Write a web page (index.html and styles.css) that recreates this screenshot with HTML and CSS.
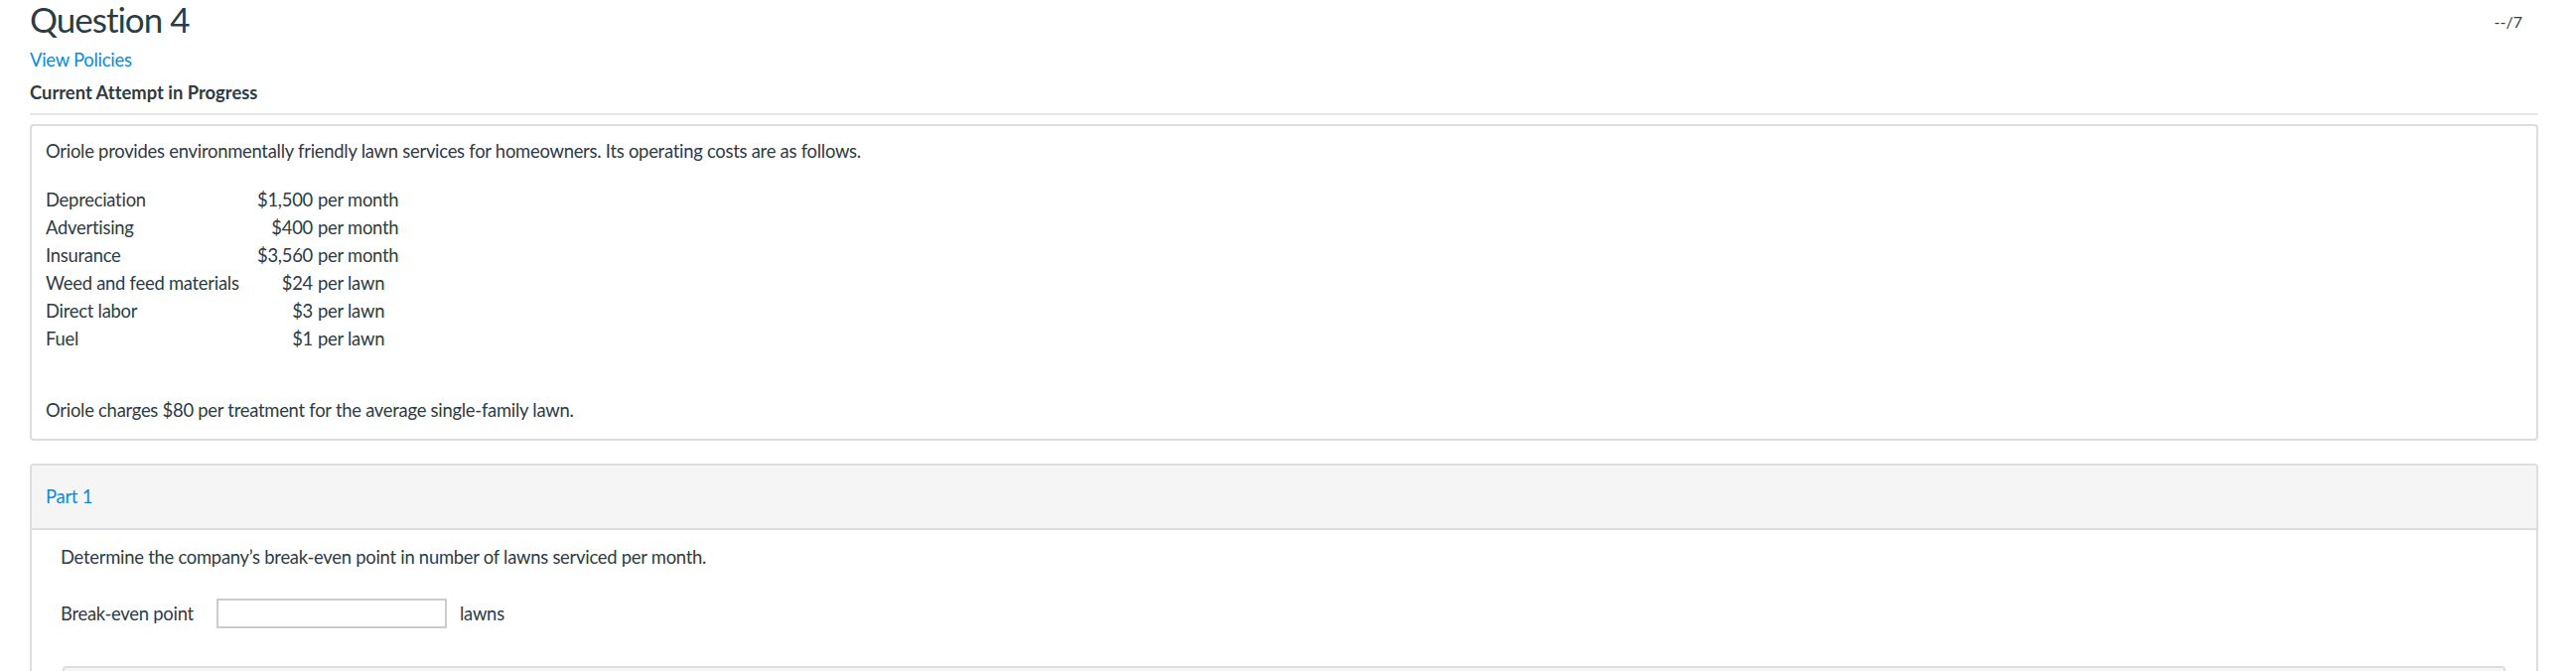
FILE: index.html
```html
<!DOCTYPE html>
<html lang="en">
<head>
<meta charset="utf-8">
<title>Question 4</title>
<link rel="stylesheet" href="styles.css">
</head>
<body>
<div class="page">
  <div class="q-header">
    <h1 class="q-title">Question 4</h1>
    <div class="q-points">--/7</div>
  </div>
  <a class="policies" href="#">View Policies</a>
  <div class="attempt">Current Attempt in Progress</div>
  <hr class="divider">

  <div class="card stem">
    <p class="stem-intro">Oriole provides environmentally friendly lawn services for homeowners. Its operating costs are as follows.</p>
    <div class="cost-table">
      <span class="cost-label">Depreciation</span><span class="cost-amt">$1,500</span><span class="cost-unit">per month</span>
      <span class="cost-label">Advertising</span><span class="cost-amt">$400</span><span class="cost-unit">per month</span>
      <span class="cost-label">Insurance</span><span class="cost-amt">$3,560</span><span class="cost-unit">per month</span>
      <span class="cost-label">Weed and feed materials</span><span class="cost-amt">$24</span><span class="cost-unit">per lawn</span>
      <span class="cost-label">Direct labor</span><span class="cost-amt">$3</span><span class="cost-unit">per lawn</span>
      <span class="cost-label">Fuel</span><span class="cost-amt">$1</span><span class="cost-unit">per lawn</span>
    </div>
    <p class="stem-outro">Oriole charges $80 per treatment for the average single-family lawn.</p>
  </div>

  <div class="card part">
    <div class="part-head">Part 1</div>
    <div class="part-body">
      <p class="part-q">Determine the company’s break-even point in number of lawns serviced per month.</p>
      <div class="answer-row">
        <label class="answer-label" for="bep">Break-even point</label>
        <input class="answer-input" id="bep" type="text">
        <span class="answer-unit">lawns</span>
      </div>
      <div class="sub-box"></div>
    </div>
  </div>
</div>
</body>
</html>
```

FILE: styles.css
```css
html, body {
  margin: 0;
  padding: 0;
  overflow: hidden;
  background: #fff;
}

body {
  font-family: Lato, "Open Sans", "Liberation Sans", sans-serif;
  color: #2d3b45;
  font-size: 18.4px;
  line-height: 28px;
  letter-spacing: -0.25px;
  font-variant-ligatures: none;
}

.page {
  padding: 0 38px 0 30px;
}

.q-header {
  display: flex;
  justify-content: space-between;
  align-items: flex-start;
}

.q-title {
  margin: 0;
  font-size: 35px;
  line-height: 39px;
  font-weight: 400;
  letter-spacing: -1px;
}

.q-points {
  font-size: 16px;
  line-height: 19px;
  margin-top: 12px;
  margin-right: 16px;
  letter-spacing: 0;
}

.policies {
  display: block;
  margin-top: 7px;
  color: #008ee2;
  text-decoration: none;
}

.attempt {
  font-weight: 700;
  margin-top: 5px;
  letter-spacing: 0;
}

.divider {
  border: 0;
  height: 2px;
  background: #e8e8e8;
  margin: 7px 0 0;
}

.card {
  border: 2px solid #dddddd;
  border-radius: 4px;
  overflow: hidden;
}

.stem {
  margin-top: 9px;
  padding: 11px 14px 15px;
}

.stem-intro {
  margin: 0 0 21px;
}

.cost-table {
  display: grid;
  grid-template-columns: 204px 65px auto;
  justify-content: start;
}

.cost-label {
  white-space: nowrap;
}

.cost-amt {
  text-align: right;
  white-space: nowrap;
}

.cost-unit {
  padding-left: 5px;
  white-space: nowrap;
}

.stem-outro {
  margin: 44px 0 0;
}

.part {
  margin-top: 23px;
}

.part-head {
  background: #f5f5f5;
  padding: 17px 14px 18px;
  border-bottom: 2px solid #dddddd;
  color: #008ee2;
}

.part-body {
  padding: 13px 31px 0 29px;
}

.part-q {
  margin: 0;
}

.answer-row {
  display: flex;
  align-items: center;
  margin-top: 28px;
  height: 30px;
}

.answer-label {
  width: 157px;
}

.answer-input {
  width: 232px;
  height: 30px;
  box-sizing: border-box;
  border: 2px solid #cccccc;
  border-radius: 0;
  margin: 0;
  padding: 0 6px;
  font: inherit;
  background: #fff;
}

.answer-unit {
  margin-left: 13px;
}

.sub-box {
  margin-top: 38px;
  margin-left: 2px;
  height: 120px;
  border: 2px solid #dddddd;
  border-radius: 4px;
  background: #f5f5f5;
}
```
